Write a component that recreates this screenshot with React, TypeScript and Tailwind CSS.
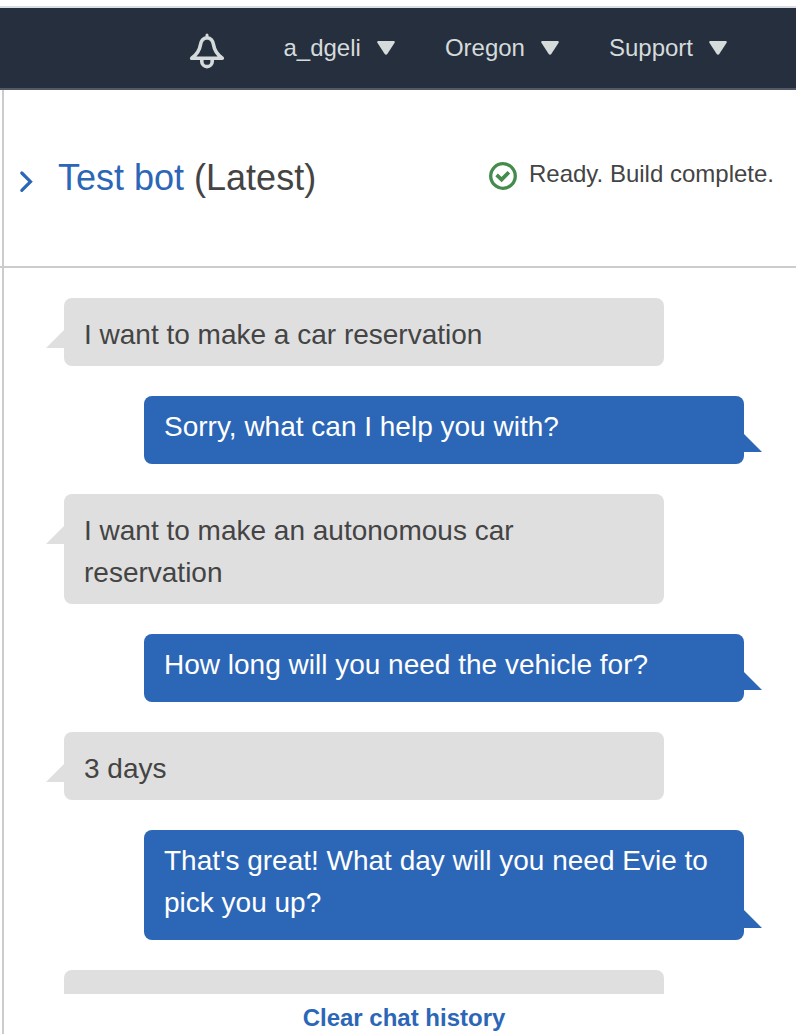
type Message = { from: 'user' | 'bot'; text: string };

const messages: Message[] = [
  { from: 'user', text: 'I want to make a car reservation' },
  { from: 'bot', text: 'Sorry, what can I help you with?' },
  { from: 'user', text: 'I want to make an autonomous car reservation' },
  { from: 'bot', text: 'How long will you need the vehicle for?' },
  { from: 'user', text: '3 days' },
  { from: 'bot', text: "That's great! What day will you need Evie to pick you up?" },
  { from: 'user', text: '' },
];

function BellIcon() {
  return (
    <svg className="h-9 w-9" viewBox="0 0 36 36" fill="none" stroke="currentColor" aria-hidden="true">
      <path
        d="M18 4.700c-4 .3-6 3.300-6.600 7.300-.8 5.600-2.700 8.800-8.700 13.300h30.600c-6-4.500-7.900-7.700-8.700-13.300-.6-4-2.600-7-6.600-7.300z"
        strokeWidth="3.6"
        strokeLinejoin="round"
      />
      <path d="M18 2v2.500" strokeWidth="3" strokeLinecap="round" />
      <path d="M12.800 26v2.400a5.200 5.200 0 0 0 10.400 0V26" strokeWidth="3.600" />
    </svg>
  );
}

function Caret() {
  return (
    <svg className="h-4 w-[18px]" viewBox="0 0 18 16" fill="currentColor" aria-hidden="true">
      <path d="M1.200 1h15.600c1 0 1.300.9.800 1.700l-7.300 11.400c-.7 1-1.900 1-2.600 0L.4 2.700C-.1 1.900.2 1 1.200 1z" />
    </svg>
  );
}

function NavMenu({ label }: { label: string }) {
  return (
    <button type="button" aria-haspopup="menu" className="flex items-center gap-4">
      {label}
      <Caret />
    </button>
  );
}

function Bubble({ message }: { message: Message }) {
  if (message.from === 'user') {
    return (
      <li className="relative min-h-[68px] w-15/17 shrink-0 self-start rounded-lg bg-[#dfdfdf] px-5 pt-4 pb-[10px] text-[#444444]">
        {message.text}
        <span className="absolute top-8 right-full h-[18px] w-[18px] bg-[#dfdfdf] [clip-path:polygon(100%_0,100%_100%,0_100%)]" />
      </li>
    );
  }
  return (
    <li className="relative min-h-[68px] w-15/17 shrink-0 self-end rounded-lg bg-[#2c66b7] px-5 pt-[10px] pb-4 text-white">
      {message.text}
      <span className="absolute bottom-3 left-full h-[18px] w-[18px] bg-[#2c66b7] [clip-path:polygon(0_0,100%_100%,0_100%)]" />
    </li>
  );
}

export default function App() {
  return (
    <div className="flex h-screen flex-col bg-white pt-[6px] font-['Liberation_Sans',Arial,sans-serif] text-[#444444]">
      <header className="shrink-0 border-t-2 border-b-2 border-t-[#dadde3] border-b-[#545967] bg-[#262f3e]">
        <nav className="flex h-20 items-center justify-end pr-[69px] text-2xl text-[#d5dbdb]">
          <button type="button" aria-label="Notifications" className="mr-[58px] pt-[6px]">
            <BellIcon />
          </button>
          <div className="flex gap-[50px]">
            <NavMenu label="a_dgeli" />
            <NavMenu label="Oregon" />
            <NavMenu label="Support" />
          </div>
        </nav>
      </header>

      <main className="flex min-h-0 flex-1 flex-col">
        <div className="shrink-0 border-b-2 border-[#cccccc] pl-[2px]">
          <div className="flex h-44 items-center justify-between border-l-2 border-[#cccccc] pr-[22px] pl-[14px]">
            <h1 className="flex items-center text-4xl">
              <button type="button" aria-label="Collapse test panel" className="mr-6 pt-2 text-[#2c66b7]">
                <svg className="h-6 w-4" viewBox="0 0 16 24" fill="none" stroke="currentColor" strokeWidth="3.2" strokeLinecap="round" aria-hidden="true">
                  <path d="M3.800 3L12.500 11.700L3.800 20.400" />
                </svg>
              </button>
              <span>
                <a href="#test-bot" className="text-[#2c66b7]">Test bot</a> (Latest)
              </span>
            </h1>
            <p className="flex items-center gap-3 pb-2 text-2xl">
              <svg className="mt-1 h-7 w-7 text-[#458b4b]" viewBox="0 0 28 28" fill="none" stroke="currentColor" aria-hidden="true">
                <circle cx="14" cy="14" r="12.300" strokeWidth="3.300" />
                <path d="M7.600 12.900l5 4.700 7.200-7.400" strokeWidth="3.800" />
              </svg>
              Ready. Build complete.
            </p>
          </div>
        </div>

        <div className="ml-[2px] flex min-h-0 flex-1 flex-col border-l-2 border-[#cccccc]">
          <ul className="flex min-h-0 flex-1 flex-col gap-[30px] overflow-y-auto pt-[30px] pr-[52px] pl-[60px] text-[28px] leading-[42px] [scrollbar-width:none]">
            {messages.map((message, index) => (
              <Bubble key={index} message={message} />
            ))}
          </ul>
          <footer className="flex h-10 shrink-0 items-center justify-center pt-2 pl-2">
            <button type="button" className="text-2xl font-bold text-[#2c66b7]">
              Clear chat history
            </button>
          </footer>
        </div>
      </main>
    </div>
  );
}
